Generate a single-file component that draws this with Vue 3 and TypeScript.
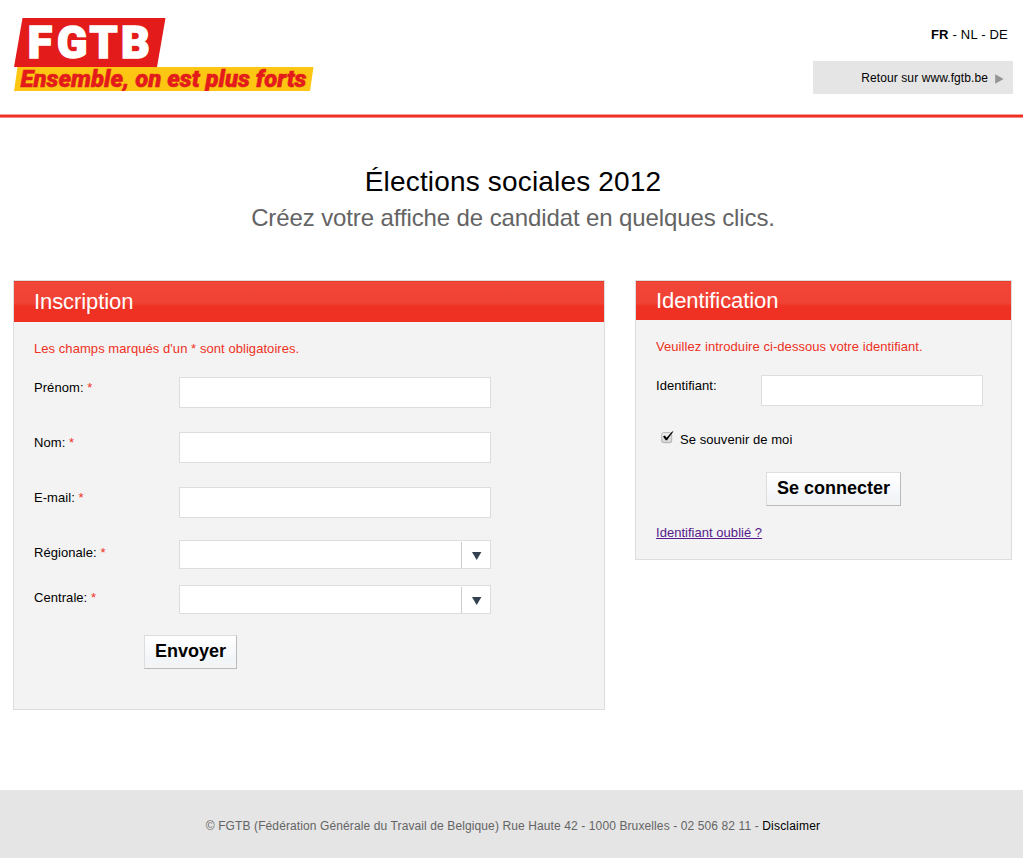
<script setup lang="ts">
import { ref } from 'vue'

interface Field {
  id: string
  label: string
  kind: 'text' | 'select'
}

const fields: Field[] = [
  { id: 'prenom', label: 'Prénom:', kind: 'text' },
  { id: 'nom', label: 'Nom:', kind: 'text' },
  { id: 'email', label: 'E-mail:', kind: 'text' },
  { id: 'regionale', label: 'Régionale:', kind: 'select' },
  { id: 'centrale', label: 'Centrale:', kind: 'select' },
]

const remember = ref(true)
</script>

<template>
  <div class="page">
    <header class="header">
      <svg class="logo" width="300" height="73" viewBox="0 0 300 73" role="img" aria-label="FGTB">
        <path d="M8.5 0H151.5L143 49H0Z" fill="#e31b1b" />
        <path d="M3.5 49H299.5L296 73H0Z" fill="#fdc613" />
        <text class="logo-name" x="13.8 43 75.6 107" y="40.2">FGTB</text>
        <text class="logo-motto" x="6.5" y="69.2" textLength="286" lengthAdjust="spacingAndGlyphs">Ensemble, on est plus forts</text>
      </svg>
      <div class="tools">
        <nav class="langs"><b>FR</b> - <a>NL</a> - <a>DE</a></nav>
        <a class="back">
          <span>Retour sur www.fgtb.be</span>
          <svg width="9" height="10" viewBox="0 0 9 10"><path d="M0.2 0.3L8.6 5L0.2 9.7Z" fill="#949494" /></svg>
        </a>
      </div>
    </header>

    <div class="intro">
      <h1>Élections sociales 2012</h1>
      <p>Créez votre affiche de candidat en quelques clics.</p>
    </div>

    <main class="columns">
      <section class="panel signup">
        <h2>Inscription</h2>
        <p class="notice">Les champs marqués d'un * sont obligatoires.</p>
        <div v-for="f in fields" :key="f.id" class="row" :class="f.kind">
          <label :for="f.id">{{ f.label }} <em>*</em></label>
          <input v-if="f.kind === 'text'" :id="f.id" type="text" />
          <div v-else :id="f.id" class="dropdown" role="combobox">
            <span class="arrow">
              <svg width="10" height="8" viewBox="0 0 10 8"><path d="M0 0H9.4L4.7 8Z" fill="#334050" /></svg>
            </span>
          </div>
        </div>
        <button type="button" class="button">Envoyer</button>
      </section>

      <section class="panel login">
        <h2>Identification</h2>
        <p class="notice">Veuillez introduire ci-dessous votre identifiant.</p>
        <div class="row">
          <label for="ident">Identifiant:</label>
          <input id="ident" type="text" />
        </div>
        <div class="remember" @click="remember = !remember">
          <svg width="13" height="13" viewBox="0 0 13 13">
            <defs>
              <linearGradient id="box" x1="0" y1="0" x2="0" y2="1">
                <stop offset="0" stop-color="#f4f4f4" />
                <stop offset="1" stop-color="#d2d2d2" />
              </linearGradient>
            </defs>
            <rect x="0.7" y="1.7" width="10" height="10" rx="1.8" fill="url(#box)" stroke="#b0b0b0" />
            <path v-if="remember" d="M2 5.6L3.9 4.6L5.5 6.8L11.2 0.5L12.4 0.5L6 9.2L4.8 9.2Z" fill="#000" />
          </svg>
          <span>Se souvenir de moi</span>
        </div>
        <button type="button" class="button">Se connecter</button>
        <a class="forgot">Identifiant oublié ?</a>
      </section>
    </main>

    <footer class="footer">
      <span>© FGTB (Fédération Générale du Travail de Belgique) Rue Haute 42 - 1000 Bruxelles - 02 506 82 11 - <a>Disclaimer</a></span>
    </footer>
  </div>
</template>

<style>
body {
  margin: 0;
  background: #fff;
}
</style>

<style scoped>
.page {
  display: flex;
  flex-direction: column;
  height: 858px;
  box-sizing: border-box;
  overflow: hidden;
  font: 13px/16px "Liberation Sans", Arial, sans-serif;
  letter-spacing: 0.06px;
  color: #000;
}
.page * {
  box-sizing: border-box;
}
.header {
  display: flex;
  justify-content: space-between;
  align-items: flex-start;
  height: 118px;
  flex: none;
  padding: 18px 10px 0 14px;
  background: linear-gradient(#f9a09a 0 1px, #ee3123 1px 3px, #f58a82 3px 4px) bottom / 100% 4px no-repeat;
}
.logo {
  display: block;
}
.logo-name {
  font: 900 44.5px Roboto, sans-serif;
  letter-spacing: 0;
  fill: #fff;
  stroke: #fff;
  stroke-width: 1.6px;
}
.logo-motto {
  font: italic 900 23px Roboto, sans-serif;
  letter-spacing: 0;
  fill: #e31b1b;
  stroke: #e31b1b;
  stroke-width: 0.5px;
}
.tools {
  width: 200px;
}
.langs {
  margin-top: 9px;
  padding-right: 5px;
  text-align: right;
  white-space: nowrap;
  letter-spacing: 0.2px;
}
.back {
  display: flex;
  align-items: center;
  justify-content: flex-end;
  gap: 7px;
  height: 33px;
  margin-top: 18px;
  padding-right: 9px;
  background: #e5e5e5;
  font-size: 12px;
  letter-spacing: 0.09px;
}
.back svg {
  margin-top: 2px;
}
.intro {
  height: 162px;
  flex: none;
  padding: 47px 0 0 3px;
  text-align: center;
}
h1 {
  margin: 0;
  font-size: 28px;
  line-height: 34px;
  font-weight: normal;
  letter-spacing: 0.17px;
}
.intro p {
  margin: 5px 0 0;
  font-size: 24px;
  line-height: 28px;
  letter-spacing: -0.11px;
  color: #646464;
}
.columns {
  display: flex;
  align-items: flex-start;
  gap: 30px;
  height: 510px;
  flex: none;
  padding-left: 13px;
}
.panel {
  display: flex;
  flex-direction: column;
  align-items: flex-start;
  border: 1px solid #ddd;
  background: #f3f3f3;
}
.signup {
  width: 592px;
  height: 430px;
}
.login {
  width: 377px;
  height: 280px;
}
h2 {
  align-self: stretch;
  height: 41px;
  margin: 0 0 19px;
  padding-left: 20px;
  background: linear-gradient(#e53a2c 0 1px, #f14638 1px, #f04235 22px, #ee3123 25px);
  color: #fff;
  font-size: 22px;
  line-height: 41px;
  font-weight: normal;
  letter-spacing: -0.08px;
}
.login h2 {
  height: 39px;
  line-height: 39px;
}
.notice {
  margin: 0 0 20px 20px;
  color: #ee3123;
}
.row {
  display: flex;
  align-items: flex-start;
  padding-left: 20px;
}
.row label {
  width: 145px;
  padding-top: 3px;
}
.row em {
  color: #ee3123;
  font-style: normal;
}
.row input {
  width: 312px;
  height: 31px;
  margin: 0;
  padding: 4px;
  border: 1px solid #ddd;
  background: #fff;
}
.text {
  height: 55px;
}
.select {
  height: 45px;
}
.dropdown {
  display: flex;
  justify-content: flex-end;
  width: 312px;
  height: 29px;
  margin-top: -2px;
  border: 1px solid #ddd;
  background: #fff;
}
.arrow {
  display: flex;
  justify-content: center;
  width: 29px;
  margin-top: 1px;
  padding: 10px 0 0 1px;
  border-left: 1px solid #ccc;
}
.button {
  height: 34px;
  margin: 3px 0 0 130px;
  padding: 0 10px 3px;
  border: 1px solid;
  border-color: #ddd #bbb #bbb #ddd;
  background: linear-gradient(#fff, #f2f5f8 75%, #f4f4f4);
  color: #000;
  font: bold 18px/28px "Liberation Sans", Arial, sans-serif;
  letter-spacing: 0;
}
.login .row label {
  width: 105px;
}
.login .row input {
  width: 222px;
}
.remember {
  display: flex;
  gap: 6px;
  margin: 25px 0 0 25px;
}
.remember span {
  padding-top: 1px;
}
.login .button {
  margin-top: 24px;
}
.forgot {
  margin: 19px 0 0 20px;
  color: #551a8b;
  letter-spacing: 0.03px;
  text-decoration: underline;
}
.footer {
  height: 68px;
  flex: none;
  padding: 28px 0 0 3px;
  background: #e5e5e5;
  color: #646464;
  font-size: 12px;
  letter-spacing: 0.11px;
  text-align: center;
}
.footer a {
  color: #000;
  letter-spacing: 0.2px;
}
</style>
